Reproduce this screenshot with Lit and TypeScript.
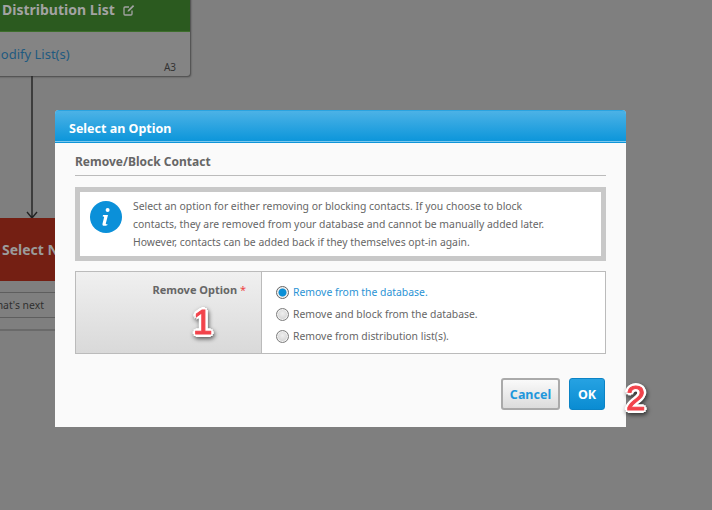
import { LitElement, html, css } from "lit";
import { customElement } from "lit/decorators.js";

const OPTIONS = ["Remove from the database.", "Remove and block from the database.", "Remove from distribution list(s)."];

@customElement("app-root")
export class AppRoot extends LitElement {
  static styles = css`
    :host { display: block; width: 712px; height: 510px; position: relative; overflow: hidden; background: #7f7f7f; font-family: "Noto Sans", "Open Sans", sans-serif; font-size: 10.4px; color: #666; }
    .card { position: absolute; left: -11px; top: -10px; width: 201px; height: 86px; background: #848484; border-radius: 3px; box-shadow: 1px 1px 2px rgba(0,0,0,.45); display: flex; flex-direction: column; }
    .card-head { height: 42px; flex: none; background: #2b5a1f; border-bottom: 1px solid #3d6e2c; box-sizing: border-box; color: #a3a3a3; font-family: "Noto Sans", sans-serif; font-weight: bold; font-size: 14px; line-height: 18px; display: flex; align-items: flex-end; gap: 8px; padding: 0 0 12px 13px; white-space: nowrap; }
    .card-head svg { flex: none; margin-bottom: 3px; }
    .card-body { flex: 1; position: relative; color: #1f5a80; font-size: 13px; line-height: 18px; padding: 13px 0 0 0; white-space: nowrap; }
    .tag { position: absolute; right: 14px; bottom: 3px; font-size: 10px; line-height: 12px; color: #333; }
    .arrow { position: absolute; left: 26px; top: 76px; }
    .red { position: absolute; left: -10px; top: 218px; width: 90px; height: 63px; background: #741f13; color: #9b9b9b; font-weight: bold; font-size: 14px; display: flex; align-items: center; padding-left: 12px; box-sizing: border-box; white-space: nowrap; }
    .next { position: absolute; left: -13px; top: 292px; width: 73px; height: 26px; box-sizing: border-box; border-top: 1px solid #5e5e5e; border-bottom: 1px solid #5e5e5e; color: #2f2f2f; display: flex; align-items: center; white-space: nowrap; }
    .next-edge { position: absolute; left: 0; top: 329px; width: 56px; height: 2px; background: #6a6a6a; }
    .modal { position: absolute; left: 55px; top: 110px; width: 571px; height: 317px; background: #fafafa; border-radius: 4px 4px 0 0; display: flex; flex-direction: column; }
    .head { height: 33px; flex: none; box-sizing: border-box; background: linear-gradient(#4cb2e6, #0a95da); border-top: 1px solid #2aa3e0; border-bottom: 1px solid #0f95d8; box-shadow: inset 0 -1px 0 #7cc8ee; border-radius: 4px 4px 0 0; color: #fff; font-weight: bold; font-size: 12.5px; line-height: 35px; padding-left: 14px; }
    .content { flex: 1; display: flex; flex-direction: column; padding: 0 20px; }
    .title { font-weight: bold; font-size: 12px; color: #666; height: 33px; line-height: 37px; box-sizing: border-box; border-bottom: 1px solid #bbb; flex: none; }
    .info { margin-top: 11px; height: 74px; box-sizing: border-box; border: 5px solid #c8c8c8; background: #fff; display: flex; align-items: flex-start; padding: 9px 0 0 10px; gap: 11px; flex: none; }
    .info svg { flex: none; }
    .info p { margin: -4px 0 0; line-height: 18px; white-space: nowrap; }
    .table { margin-top: 10px; height: 83px; width: 531px; box-sizing: border-box; border: 1px solid #bbb; display: flex; background: #fff; flex: none; }
    .label { width: 186px; flex: none; box-sizing: border-box; background: linear-gradient(#f0f0f0, #d9d9d9); border-right: 1px solid #bbb; text-align: right; padding: 10px 15px 0 0; font-weight: bold; font-size: 11px; }
    .req { color: #e44; font-weight: normal; }
    .opts { flex: 1; display: flex; flex-direction: column; gap: 4px; padding: 11px 0 0 14px; }
    .opt { display: flex; align-items: center; gap: 4px; height: 18px; white-space: nowrap; }
    .opt.on { color: #2a93d5; }
    .radio { width: 13px; height: 13px; box-sizing: border-box; border-radius: 50%; border: 1px solid #7d7d7d; background: radial-gradient(circle at 50% 40%, #efefef, #c9c9c9); box-shadow: inset 0 0 0 1px #f2f2f2; flex: none; }
    .opt.on .radio { background: radial-gradient(circle, #0a8fd6 0 3.5px, #e4e4e4 4.5px); border-color: #666; }
    .actions { display: flex; justify-content: flex-end; gap: 9px; margin: 24px 1px 0 0; }
    .btn { height: 32px; box-sizing: border-box; border-radius: 3px; font-family: "Noto Sans", sans-serif; font-weight: bold; font-size: 12.5px; padding: 0; }
    .cancel { width: 59px; background: linear-gradient(#fafafa, #dcdcdc); border: 2px solid #aaa; color: #1f97dc; }
    .ok { width: 36px; background: linear-gradient(#26a2e2, #0a8cd2); border: 1px solid #0b83c5; color: #fff; }
    .num { position: absolute; font-family: "Liberation Sans", Arial, sans-serif; color: #f2434b; font-size: 35px; line-height: 36px; -webkit-text-stroke: 1px #f2434b; text-shadow: 3px 0 #fff, -3px 0 #fff, 0 3px #fff, 0 -3px #fff, 2px 2px #fff, -2px 2px #fff, 2px -2px #fff, -2px -2px #fff; filter: drop-shadow(1px 2px 2px rgba(0,0,0,.6)); }
    .n1 { left: 193px; top: 304px; }
    .n2 { left: 626px; top: 380px; }
  `;

  render() {
    return html`
      <div class="card">
        <div class="card-head">
          <span>Distribution List</span>
          <svg width="12" height="12" viewBox="0 0 12 12" fill="none" stroke="#a3a3a3" stroke-width="1.3"><path d="M9 6.500V10a1 1 0 0 1-1 1H2a1 1 0 0 1-1-1V4a1 1 0 0 1 1-1h4"/><path d="M4.500 7.800 5 6l5-5 1.200 1.200-5 5z" fill="#a3a3a3" stroke="none"/></svg>
        </div>
        <div class="card-body"><span>Modify List(s)</span><span class="tag">A3</span></div>
      </div>
      <svg class="arrow" width="12" height="143" viewBox="0 0 12 143" fill="none" stroke="#222" stroke-width="1.4"><path d="M6 0V141M1 136l5 6 5-6"/></svg>
      <div class="red">Select Next</div>
      <div class="next">What's next</div>
      <div class="next-edge"></div>

      <div class="modal">
        <div class="head">Select an Option</div>
        <div class="content">
          <div class="title">Remove/Block Contact</div>
          <div class="info">
            <svg width="32" height="32" viewBox="0 0 32 32"><circle cx="16" cy="16" r="16" fill="#0b90d9"/><circle cx="17.600" cy="9" r="2" fill="#fff"/><path d="M13 14h5l-2.200 8.500c-.2.800.4 1 1.700.4l-.3 1.300c-2.500 1-5.200 1-4.700-1.500l1.600-6.400c.1-.6-.3-.8-1.400-.8z" fill="#fff"/></svg>
            <p>Select an option for either removing or blocking contacts. If you choose to block<br>contacts, they are removed from your database and cannot be manually added later.<br>However, contacts can be added back if they themselves opt-in again.</p>
          </div>
          <div class="table">
            <div class="label">Remove Option <span class="req">*</span></div>
            <div class="opts">
              ${OPTIONS.map((o, i) => html`<div class="opt ${i === 0 ? "on" : ""}"><span class="radio"></span><span>${o}</span></div>`)}
            </div>
          </div>
          <div class="actions">
            <button class="btn cancel">Cancel</button>
            <button class="btn ok">OK</button>
          </div>
        </div>
      </div>
      <div class="num n1">1</div>
      <div class="num n2">2</div>
    `;
  }
}
